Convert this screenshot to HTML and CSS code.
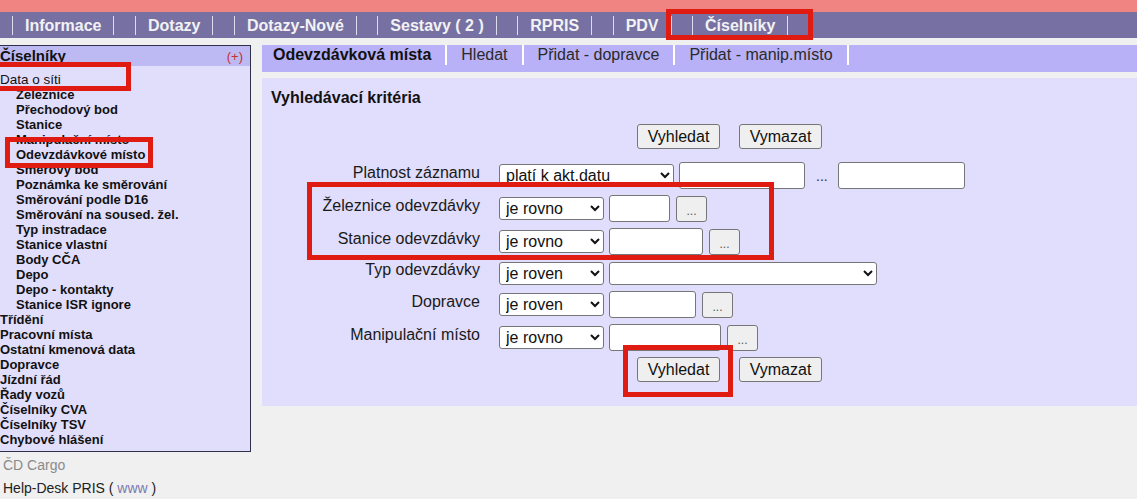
FILE: index.html
```html
<!DOCTYPE html>
<html lang="cs">
<head>
<meta charset="utf-8">
<title>PRIS – Číselníky – Odevzdávková místa</title>
<link rel="stylesheet" href="styles.css">
</head>
<body>
<div class="topstrip"></div>
<nav class="mainnav">
  <span class="nav-item">Informace</span>
  <span class="nav-item">Dotazy</span>
  <span class="nav-item">Dotazy-Nové</span>
  <span class="nav-item">Sestavy ( 2 )</span>
  <span class="nav-item">RPRIS</span>
  <span class="nav-item">PDV</span>
  <span class="nav-item">Číselníky</span>
</nav>
<div class="layout">
  <aside class="side">
    <div class="menu-box">
      <div class="menu-head"><span class="menu-title">Číselníky</span><span class="menu-plus">(+)</span></div>
      <ul class="menu-list">
        <li class="lvl1 open">Data o síti</li>
        <li class="lvl2">Železnice</li>
        <li class="lvl2">Přechodový bod</li>
        <li class="lvl2">Stanice</li>
        <li class="lvl2">Manipulační místo</li>
        <li class="lvl2">Odevzdávkové místo</li>
        <li class="lvl2">Směrový bod</li>
        <li class="lvl2">Poznámka ke směrování</li>
        <li class="lvl2">Směrování podle D16</li>
        <li class="lvl2">Směrování na soused. žel.</li>
        <li class="lvl2">Typ instradace</li>
        <li class="lvl2">Stanice vlastní</li>
        <li class="lvl2">Body CČA</li>
        <li class="lvl2">Depo</li>
        <li class="lvl2">Depo - kontakty</li>
        <li class="lvl2">Stanice ISR ignore</li>
        <li class="lvl1">Třídění</li>
        <li class="lvl1">Pracovní místa</li>
        <li class="lvl1">Ostatní kmenová data</li>
        <li class="lvl1">Dopravce</li>
        <li class="lvl1">Jízdní řád</li>
        <li class="lvl1">Řady vozů</li>
        <li class="lvl1">Číselníky CVA</li>
        <li class="lvl1">Číselníky TSV</li>
        <li class="lvl1">Chybové hlášení</li>
      </ul>
    </div>
    <div class="foot-brand">ČD Cargo</div>
    <div class="foot-help">Help-Desk PRIS ( <span class="foot-www">www</span> )</div>
  </aside>
  <main class="content">
    <div class="tabs">
      <span class="tab active">Odevzdávková místa</span>
      <span class="tab">Hledat</span>
      <span class="tab">Přidat - dopravce</span>
      <span class="tab">Přidat - manip.místo</span>
    </div>
    <section class="panel">
      <h2 class="panel-title">Vyhledávací kritéria</h2>
      <div class="crit">
        <div class="btn-row first"><button class="btn">Vyhledat</button><button class="btn">Vymazat</button></div>

        <label class="crit-label">Platnost záznamu</label>
        <div class="ctrl">
          <select class="sel sel-wide"><option>platí k akt.datu</option></select>
          <input class="inp w126" type="text">
          <span class="range-sep">...</span>
          <input class="inp w127" type="text">
        </div>

        <label class="crit-label">Železnice odevzdávky</label>
        <div class="ctrl">
          <select class="sel sel-op"><option>je rovno</option></select>
          <input class="inp w61" type="text">
          <button class="dots-btn">...</button>
        </div>

        <label class="crit-label">Stanice odevzdávky</label>
        <div class="ctrl">
          <select class="sel sel-op"><option>je rovno</option></select>
          <input class="inp w94" type="text">
          <button class="dots-btn">...</button>
        </div>

        <label class="crit-label">Typ odevzdávky</label>
        <div class="ctrl">
          <select class="sel sel-op"><option>je roven</option></select>
          <select class="sel sel-long"><option></option></select>
        </div>

        <label class="crit-label">Dopravce</label>
        <div class="ctrl">
          <select class="sel sel-op"><option>je roven</option></select>
          <input class="inp w87" type="text">
          <button class="dots-btn">...</button>
        </div>

        <label class="crit-label">Manipulační místo</label>
        <div class="ctrl">
          <select class="sel sel-op"><option>je rovno</option></select>
          <input class="inp w112" type="text">
          <button class="dots-btn">...</button>
        </div>

        <div class="btn-row"><button class="btn">Vyhledat</button><button class="btn">Vymazat</button></div>
      </div>
    </section>
  </main>
</div>
<div class="mark mark-nav"></div>
<div class="mark mark-data"></div>
<div class="mark mark-odev"></div>
<div class="mark mark-form"></div>
<div class="mark mark-btn"></div>
</body>
</html>
```
FILE: styles.css
```css
html, body {
  margin: 0;
  padding: 0;
}
body {
  position: relative;
  width: 1137px;
  height: 499px;
  overflow: hidden;
  background: #f0f0f0;
  font-family: "Liberation Sans", Arial, sans-serif;
  color: #111;
}

/* top */
.topstrip {
  height: 12px;
  background: #f08482;
}
.mainnav {
  height: 26px;
  background: #7671a2;
  display: flex;
  align-items: center;
  padding-left: 12px;
}
.nav-item {
  height: 19px;
  line-height: 19px;
  padding: 0 12px;
  margin-right: 20.5px;
  border-left: 1px solid #dcdcea;
  border-right: 1px solid #dcdcea;
  color: #f2f2f4;
  font-size: 16px;
  font-weight: bold;
  white-space: nowrap;
}

/* layout */
.layout {
  display: flex;
  align-items: flex-start;
  margin-top: 7px;
}
.side {
  flex: none;
  width: 253px;
  margin-left: -2px;
}
.menu-box {
  border: 1px solid #2f2f4a;
  background: #e1defc;
}
.menu-head {
  height: 20px;
  display: flex;
  align-items: center;
  justify-content: space-between;
  padding: 0 7px 0 1px;
  background: #bdb9f3;
}
.menu-title {
  font-size: 15px;
  font-weight: bold;
  line-height: 20px;
}
.menu-plus {
  font-size: 13px;
  color: #c8302e;
}
.menu-list {
  list-style: none;
  margin: 0;
  padding: 6px 0 4px;
  font-size: 13px;
  font-weight: bold;
  line-height: 15px;
  white-space: nowrap;
}
.lvl1 {
  padding-left: 1px;
}
.lvl1.open {
  font-weight: normal;
  font-size: 13.5px;
}
.lvl2 {
  padding-left: 17px;
}
.foot-brand {
  margin-top: 4px;
  padding-left: 5px;
  font-size: 14px;
  line-height: 18px;
  color: #8a8a8a;
}
.foot-help {
  margin-top: 5px;
  padding-left: 5px;
  font-size: 14px;
  line-height: 18px;
  color: #222;
}
.foot-www {
  color: #7b7bb0;
}

/* main */
.content {
  flex: 1;
  margin-left: 11px;
}
.tabs {
  display: flex;
  height: 27px;
  background: #b8b1f7;
}
.tab {
  height: 20px;
  line-height: 20px;
  padding: 0 14px;
  border-right: 2px solid #ffffff;
  font-size: 16px;
  color: #2a2a2a;
  white-space: nowrap;
}
.tab.active {
  padding-left: 11px;
  font-weight: bold;
  color: #111;
}
.panel {
  box-sizing: border-box;
  height: 328px;
  margin-top: 6px;
  padding: 10px 0 0 9px;
  background: #e1ddfc;
}
.panel-title {
  margin: 0;
  font-size: 16px;
  font-weight: bold;
  line-height: 20px;
}
.crit {
  margin-top: 16px;
  display: grid;
  grid-template-columns: 209px auto;
  column-gap: 19px;
  row-gap: 6px;
  align-items: center;
  justify-content: start;
}
.btn-row {
  grid-column: 2;
  width: 461px;
  display: flex;
  justify-content: center;
  gap: 19px;
}
.btn-row.first {
  margin-bottom: 7px;
}
.btn {
  width: 83px;
  height: 25px;
  padding: 0;
  border: 1px solid #767676;
  border-radius: 3px;
  background: #efefef;
  color: #111;
  font: 16px "Liberation Sans", Arial, sans-serif;
}
.crit-label {
  text-align: right;
  padding-bottom: 6px;
  font-size: 16px;
  color: #1a1a1a;
  white-space: nowrap;
}
.ctrl {
  display: flex;
  align-items: center;
  gap: 5px;
}
.sel {
  box-sizing: border-box;
  height: 23px;
  padding: 0 0 0 2px;
  border: 1px solid #767676;
  border-radius: 3px;
  background: #ffffff;
  color: #111;
  font: 16px "Liberation Sans", Arial, sans-serif;
}
.sel-op { width: 105px; }
.sel-wide { width: 175px; }
.sel-long { width: 268px; }
.inp {
  box-sizing: border-box;
  height: 27px;
  padding: 0 3px;
  border: 1px solid #767676;
  border-radius: 3px;
  background: #ffffff;
  font: 16px "Liberation Sans", Arial, sans-serif;
}
.w61 { width: 61px; }
.w87 { width: 87px; }
.w94 { width: 94px; }
.w112 { width: 112px; }
.w126 { width: 126px; }
.w127 { width: 127px; }
.range-sep {
  margin: 0 5px 0 6px;
  font-size: 14px;
  color: #333;
}
.dots-btn {
  box-sizing: border-box;
  width: 31px;
  height: 26px;
  margin-left: 1px;
  padding: 4px 0 0;
  border: 1px solid #767676;
  border-radius: 3px;
  background: #efefef;
  color: #555;
  font: 12px "Liberation Sans", Arial, sans-serif;
}

/* annotation marks */
.mark {
  position: absolute;
  box-sizing: border-box;
  border: 5px solid #df1b12;
  pointer-events: none;
}
.mark-nav { left: 666px; top: 9px; width: 147px; height: 31px; }
.mark-data { left: -6px; top: 62px; width: 137px; height: 29px; }
.mark-odev { left: 5px; top: 137px; width: 148px; height: 31px; }
.mark-form { left: 307px; top: 182px; width: 467px; height: 78px; }
.mark-btn { left: 623px; top: 345px; width: 110px; height: 52px; }
```
